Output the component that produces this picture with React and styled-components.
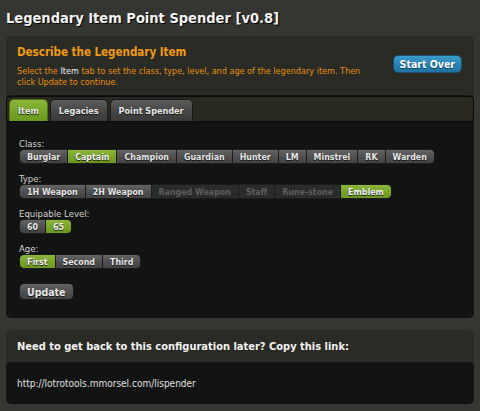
import React, { useState } from 'react';
import styled, { createGlobalStyle, css } from 'styled-components';

const FONT = `"DejaVu Sans Condensed", "DejaVu Sans", sans-serif`;

const GlobalStyle = createGlobalStyle`
  html, body {
    margin: 0;
    padding: 0;
    background: #353531;
  }
  body {
    font-family: ${FONT};
    color: #ddd;
  }
`;

const CLASSES = ['Burglar', 'Captain', 'Champion', 'Guardian', 'Hunter', 'LM', 'Minstrel', 'RK', 'Warden'];
const TYPES = [
  { name: '1H Weapon' },
  { name: '2H Weapon' },
  { name: 'Ranged Weapon', disabled: true },
  { name: 'Staff', disabled: true },
  { name: 'Rune-stone', disabled: true },
  { name: 'Emblem' },
];
const LEVELS = ['60', '65'];
const AGES = ['First', 'Second', 'Third'];

const App = () => {
  const [tab, setTab] = useState('item');
  const [cls, setCls] = useState('Captain');
  const [type, setType] = useState('Emblem');
  const [level, setLevel] = useState('65');
  const [age, setAge] = useState('First');

  return (
    <>
      <GlobalStyle />
      <Page>
        <Title>Legendary Item Point Spender [v0.8]</Title>

        <Panel>
          <PanelHead>
            <div>
              <Heading>Describe the Legendary Item</Heading>
              <Desc>
                Select the <em>Item</em> tab to set the class, type, level, and age of the legendary item. Then
                <br />
                click Update to continue.
              </Desc>
            </div>
            <StartOver>Start Over</StartOver>
          </PanelHead>

          <Tabs>
            <TabNav>
              <Tab $active={tab === 'item'} onClick={() => setTab('item')}>Item</Tab>
              <Tab $active={tab === 'legacies'} onClick={() => setTab('legacies')}>Legacies</Tab>
              <Tab $active={tab === 'spender'} onClick={() => setTab('spender')}>Point Spender</Tab>
            </TabNav>

            <TabPanel>
              <Field>
                <Label>Class:</Label>
                <Group>
                  {CLASSES.map((c) => (
                    <Seg key={c} $active={cls === c} onClick={() => setCls(c)}>{c}</Seg>
                  ))}
                </Group>
              </Field>

              <Field>
                <Label>Type:</Label>
                <Group>
                  {TYPES.map((t) => (
                    <Seg
                      key={t.name}
                      $active={type === t.name}
                      $disabled={t.disabled}
                      onClick={() => !t.disabled && setType(t.name)}
                    >
                      {t.name}
                    </Seg>
                  ))}
                </Group>
              </Field>

              <Field>
                <Label>Equipable Level:</Label>
                <Group>
                  {LEVELS.map((l) => (
                    <Seg key={l} $active={level === l} onClick={() => setLevel(l)}>{l}</Seg>
                  ))}
                </Group>
              </Field>

              <Field>
                <Label>Age:</Label>
                <Group>
                  {AGES.map((a) => (
                    <Seg key={a} $active={age === a} onClick={() => setAge(a)}>{a}</Seg>
                  ))}
                </Group>
              </Field>

              <UpdateButton>Update</UpdateButton>
            </TabPanel>
          </Tabs>
        </Panel>

        <Panel $gap>
          <LinkHead>Need to get back to this configuration later? Copy this link:</LinkHead>
          <LinkBox>http://lotrotools.mmorsel.com/lispender</LinkBox>
        </Panel>
      </Page>
    </>
  );
};

const Page = styled.div`
  padding: 8px 6px 0;
`;

const Title = styled.h1`
  margin: 0 0 8px;
  font-size: 14.5px;
  line-height: 20px;
  font-weight: bold;
  color: #f2f2f2;
  text-shadow: 1px 1px 1px #000;
`;

const Panel = styled.div`
  background: #2b2b25;
  border-radius: 5px;
  margin-top: ${(p) => (p.$gap ? '12px' : '0')};
`;

const PanelHead = styled.div`
  display: flex;
  justify-content: space-between;
  align-items: flex-start;
  padding: 9px 12px 7px 11px;
`;

const Heading = styled.h2`
  margin: 0 0 7px;
  font-size: 11.5px;
  line-height: 14px;
  font-weight: bold;
  color: #f09a12;
`;

const Desc = styled.p`
  margin: 0;
  font-size: 9px;
  line-height: 11px;
  color: #e48d10;

  em {
    font-style: normal;
    color: #eee;
  }
`;

const StartOver = styled.button`
  flex-shrink: 0;
  font-family: ${FONT};
  font-size: 10.5px;
  font-weight: bold;
  color: #fff;
  text-shadow: 0 1px 1px #0b3b55;
  height: 18px;
  padding: 0 6px;
  margin-top: 10px;
  border: 1px solid #16506e;
  border-radius: 5px;
  background: linear-gradient(#3b9bcb, #2882b3 55%, #2174a3);
  cursor: pointer;
`;

const Tabs = styled.div`
  background: #121313;
  border-radius: 5px;
  padding: 1px 0 0;
`;

const TabNav = styled.div`
  display: flex;
  gap: 2px;
  height: 22px;
  padding: 2px 2px 0;
  background: #2a2a21;
  border: 1px solid #0b0b0b;
  border-radius: 5px;
`;

const Tab = styled.button`
  font-family: ${FONT};
  font-size: 9px;
  font-weight: bold;
  color: #e8e8e8;
  text-shadow: 0 1px 1px #111;
  padding: 0 8px;
  height: 22px;
  border: 1px solid #1a1a1a;
  border-bottom: none;
  border-radius: 5px 5px 0 0;
  background: linear-gradient(#5c5c5c, #444 60%, #3a3a3a);
  cursor: pointer;

  ${(p) =>
    p.$active &&
    css`
      background: linear-gradient(#8bb83c, #76a326 60%, #6b981f);
      border-color: #4d7015;
    `}
`;

const TabPanel = styled.div`
  padding: 16px 13px 18px;
`;

const Field = styled.div`
  margin-bottom: 9px;
`;

const Label = styled.div`
  font-size: 9.5px;
  line-height: 11px;
  color: #d4d4d4;
`;

const Group = styled.div`
  display: flex;
`;

const Seg = styled.button`
  font-family: ${FONT};
  font-size: 8.8px;
  font-weight: bold;
  color: #e6e6e6;
  text-shadow: 0 1px 1px #111;
  height: 15px;
  padding: 0 7px;
  border: 1px solid #1c1c1c;
  border-left-width: 0;
  background: linear-gradient(#646464, #4c4c4c 60%, #444);
  cursor: pointer;

  &:first-child {
    border-left-width: 1px;
    border-radius: 5px 0 0 5px;
  }
  &:last-child {
    border-radius: 0 5px 5px 0;
  }

  ${(p) =>
    p.$active &&
    css`
      background: linear-gradient(#8bb83c, #76a326 60%, #6b981f);
      color: #f4f4f4;
    `}

  ${(p) =>
    p.$disabled &&
    css`
      background: #2a2b2b;
      color: #5c5d5d;
      text-shadow: none;
      cursor: default;
    `}
`;

const UpdateButton = styled.button`
  display: block;
  margin-top: 14px;
  font-family: ${FONT};
  font-size: 10.5px;
  font-weight: bold;
  color: #e8e8e8;
  text-shadow: 0 1px 1px #111;
  height: 17px;
  padding: 0 7px;
  border: 1px solid #1c1c1c;
  border-radius: 5px;
  background: linear-gradient(#646464, #4c4c4c 60%, #444);
  cursor: pointer;
`;

const LinkHead = styled.div`
  padding: 0 11px;
  height: 32px;
  display: flex;
  align-items: center;
  font-size: 11px;
  font-weight: bold;
  color: #f2f2f2;
`;

const LinkBox = styled.div`
  background: #121313;
  border-radius: 5px;
  height: 42px;
  padding: 0 11px;
  display: flex;
  align-items: center;
  font-size: 10px;
  color: #e0e0e0;
`;

export default App;
